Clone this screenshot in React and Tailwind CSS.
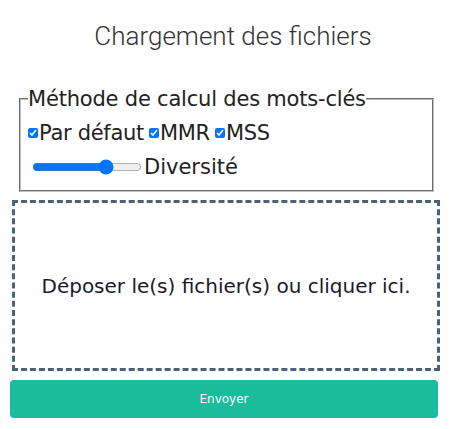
export default function App() {
  return (
    <div className="min-h-screen bg-white font-['DejaVu_Sans',sans-serif] text-[#222]">
      <h1 className="pt-[20px] pl-[16px] text-center font-['Roboto',sans-serif] text-[26px] font-light leading-[32px] text-[#333]">
        Chargement des fichiers
      </h1>

      <fieldset className="ml-[19px] mt-[35px] w-[415px] border-2 border-[#c0c0c0] [border-style:groove] px-[7px] pb-[10px]">
        <legend className="text-[21px] leading-[24px] tracking-[-0.2px]">Méthode de calcul des mots-clés</legend>
        <div className="flex items-center text-[21px] leading-[26px] mt-[9px] tracking-[-0.3px]">
          <label className="flex items-center">
            <input type="checkbox" defaultChecked className="w-[10px] h-[10px] mx-0 accent-[#0075ff]" />
            <span className="ml-[1px]">Par défaut</span>
          </label>
          <label className="flex items-center ml-[5px]">
            <input type="checkbox" defaultChecked className="w-[10px] h-[10px] mx-0 accent-[#0075ff]" />
            <span className="ml-[1px]">MMR</span>
          </label>
          <label className="flex items-center ml-[5px]">
            <input type="checkbox" defaultChecked className="w-[10px] h-[10px] mx-0 accent-[#0075ff]" />
            <span className="ml-[1px]">MSS</span>
          </label>
        </div>
        <div className="flex items-center text-[21px] leading-[26px] mt-[8px]">
          <input type="range" min="0" max="100" defaultValue="70" className="ml-[4px] w-[110px] accent-[#0075ff]" />
          <span className="ml-[2px]">Diversité</span>
        </div>
      </fieldset>

      <div className="ml-[12px] mt-[8px] w-[428px] h-[171px] border-[3px] border-dashed border-[#4a6278] flex items-center justify-center">
        <p className="text-[20px] text-[#1a1a2e]">Déposer le(s) fichier(s) ou cliquer ici.</p>
      </div>

      <button className="ml-[10px] mt-[9px] w-[428px] h-[38px] rounded-[4px] bg-[#1abc9c] text-white text-[12px]">
        Envoyer
      </button>
    </div>
  );
}
